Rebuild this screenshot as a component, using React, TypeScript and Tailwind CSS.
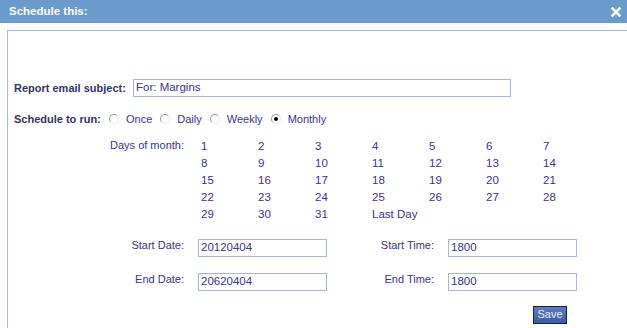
const days = Array.from({ length: 31 }, (_, i) => String(i + 1))

function Radio({ checked }: { checked?: boolean }) {
  return (
    <span className="relative inline-block h-[10px] w-[10px] rounded-full border border-t-[#9a9a9a] border-l-[#9a9a9a] border-b-[#e8e8e8] border-r-[#e8e8e8] bg-white">
      {checked && (
        <span className="absolute left-[2px] top-[2px] h-[4px] w-[4px] rounded-full bg-black" />
      )}
    </span>
  )
}

function TextBox({ value, className }: { value: string; className: string }) {
  return (
    <div
      className={`flex h-[18px] items-center border border-[#9fb9dd] bg-white pl-[2px] text-[11.5px] text-[#333399] ${className}`}
    >
      {value}
    </div>
  )
}

export default function App() {
  return (
    <div
      className="h-[328px] w-[627px] overflow-hidden bg-white text-[#333399]"
      style={{ fontFamily: '"Liberation Sans", Arial, sans-serif' }}
    >
      <div className="flex h-[23px] items-center justify-between bg-[#699bcd] pl-[9px] pr-[6px]">
        <span className="text-[11.5px] font-bold text-white">Schedule this:</span>
        <svg width="10" height="10" viewBox="0 0 10 10">
          <path d="M1.5 1.5 L8.5 8.5 M8.5 1.5 L1.5 8.5" stroke="#ffffff" strokeWidth="2.6" strokeLinecap="square" />
        </svg>
      </div>

      <div className="ml-[7px] mt-[7px] h-[300px] border-l border-t border-[#a9b6e8] pl-[6px] pt-[48px]">
        <div className="flex items-center">
          <span className="w-[119px] text-[11px] font-bold text-[#333366]">Report email subject:</span>
          <TextBox value="For: Margins" className="w-[378px]" />
        </div>

        <div className="mt-[14px] flex items-center text-[11px]">
          <span className="w-[95px] font-bold text-[#333366]">Schedule to run:</span>
          <div className="flex items-center gap-[7px]">
            <Radio />
            <span>Once</span>
          </div>
          <div className="ml-[8px] flex items-center gap-[7px]">
            <Radio />
            <span>Daily</span>
          </div>
          <div className="ml-[8px] flex items-center gap-[7px]">
            <Radio />
            <span>Weekly</span>
          </div>
          <div className="ml-[8px] flex items-center gap-[7px]">
            <Radio checked />
            <span>Monthly</span>
          </div>
        </div>

        <div className="mt-[8px] flex text-[11px]">
          <span className="w-[170px] pt-[1px] text-right">Days of month:</span>
          <div className="ml-[17px] grid grid-cols-[repeat(7,57px)] pt-[2px]">
            {days.map((d, i) => (
              <span
                key={d}
                className={`h-[17px] text-[11.5px] ${i % 3 === 0 ? 'text-[#4a2c8f]' : 'text-[#333399]'}`}
              >
                {d}
              </span>
            ))}
            <span className="h-[17px] text-[11.5px] text-[#333399]">Last Day</span>
          </div>
        </div>

        <div className="mt-[16px] flex items-center text-[11px]">
          <span className="mt-[-4px] w-[170px] text-right">Start Date:</span>
          <TextBox value="20120404" className="ml-[14px] w-[129px]" />
          <span className="mt-[-4px] w-[107px] text-right">Start Time:</span>
          <TextBox value="1800" className="ml-[14px] w-[129px]" />
        </div>

        <div className="mt-[16px] flex items-center text-[11px]">
          <span className="mt-[-4px] w-[170px] text-right">End Date:</span>
          <TextBox value="20620404" className="ml-[14px] w-[129px]" />
          <span className="mt-[-4px] w-[107px] text-right">End Time:</span>
          <TextBox value="1800" className="ml-[14px] w-[129px]" />
        </div>

        <div className="mt-[15px] flex">
          <div className="ml-[519px] flex h-[18px] w-[34px] items-center justify-center border border-[#16204a] bg-gradient-to-b from-[#5b7cc0] to-[#3a5ca4] text-[11px] text-[#e8eeff]">
            Save
          </div>
        </div>
      </div>
    </div>
  )
}
